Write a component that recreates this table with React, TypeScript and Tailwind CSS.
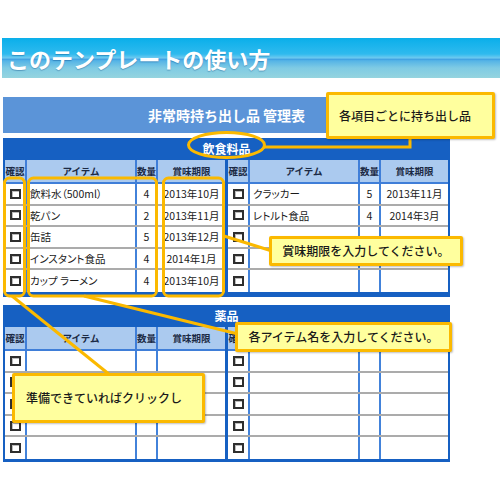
import React from 'react';

type Row = { name?: string; qty?: string; date?: string };

const COLS = 'grid grid-cols-[22px_110px_21px_67px]';

const food: Row[] = [
  { name: '飲料水（500ml）', qty: '4', date: '2013年10月' },
  { name: '乾パン', qty: '2', date: '2013年11月' },
  { name: '缶詰', qty: '5', date: '2013年12月' },
  { name: 'インスタント食品', qty: '4', date: '2014年1月' },
  { name: 'カップ ラーメン', qty: '4', date: '2013年10月' },
];

const food2: Row[] = [
  { name: 'クラッカー', qty: '5', date: '2013年11月' },
  { name: 'レトルト食品', qty: '4', date: '2014年3月' },
  {},
  {},
  {},
];

const empty: Row[] = [{}, {}, {}, {}, {}];

const Check = () => (
  <span className="block w-[11px] h-[10px] border-2 border-[#2e2e2e] bg-white shadow-[inset_1px_1px_0_#bbb]" />
);

function SubTable({ rows }: { rows: Row[] }) {
  const heads = ['確認', 'アイテム', '数量', '賞味期限'];
  return (
    <div className="w-[220px] bg-white">
      <div className={`${COLS} h-[24px] bg-[#abcaef] border-b-2 border-[#3f7ed8] text-[9.5px] font-bold text-[#1c2a45] whitespace-nowrap`}>
        {heads.map((h, i) => (
          <div
            key={h}
            className={`flex items-center justify-center overflow-hidden ${i < 3 ? 'border-r-2 border-[#3f7ed8]' : ''}`}
          >
            {h}
          </div>
        ))}
      </div>
      <div className="grid grid-rows-5 h-[108px] text-[10.5px] text-[#1a1a1a] [font-feature-settings:'palt']">
        {rows.map((r, i) => (
          <div key={i} className={`${COLS} ${i < 4 ? 'border-b-2 border-[#ababab]' : ''}`}>
            <div className="flex items-center justify-center border-r-2 border-[#4282da]">
              <Check />
            </div>
            <div className="flex items-center pl-[3px] border-r-2 border-[#4282da] whitespace-nowrap">{r.name}</div>
            <div className="flex items-center justify-center border-r-2 border-[#4282da]">{r.qty}</div>
            <div className="flex items-center justify-center whitespace-nowrap">{r.date}</div>
          </div>
        ))}
      </div>
    </div>
  );
}

function Table({ title, left, right, className }: { title: string; left: Row[]; right: Row[]; className: string }) {
  return (
    <div className={`w-[447px] bg-[#1660c2] px-[2px] ${className}`}>
      <div className="h-[22px] flex items-center justify-center text-white text-[12px] font-bold">{title}</div>
      <div className="flex gap-[3px]">
        <SubTable rows={left} />
        <SubTable rows={right} />
      </div>
    </div>
  );
}

function Callout({ text, className }: { text: string; className: string }) {
  return (
    <div
      className={`absolute flex items-center border-[3px] border-[#fbb900] bg-[#ffff9e] rounded-[2px] text-[12px] font-medium text-[#1a1a1a] shadow-[1px_1px_2px_rgba(0,0,0,0.25)] whitespace-nowrap ${className}`}
    >
      {text}
    </div>
  );
}

export default function App() {
  return (
    <div className="relative w-[500px] h-[500px] overflow-hidden bg-white font-['Noto_Sans_CJK_JP','Noto_Sans',sans-serif]">
      <div className="pt-[38px] pl-[2px]">
        <div className="h-[40px] w-[498px] flex items-center pl-[5px] bg-[linear-gradient(to_bottom,#0aafea_0%,#2fbaee_40%,#6fcaf0_50%,#3f9fe2_53%,#55b4e6_57%,#7fcbe4_75%,#95d4df_100%)]">
          <h1 className="text-white text-[22px] font-bold leading-none [text-shadow:0_1px_1px_rgba(0,60,120,0.35)]">
            このテンプレートの使い方
          </h1>
        </div>
      </div>

      <div className="pl-[3px] mt-[19px] flex flex-col">
        <div className="w-[447px] h-[36px] bg-[#5b94d8] flex items-center justify-center text-white text-[14px] font-bold">
          非常時持ち出し品 管理表
        </div>
        <Table title="飲食料品" left={food} right={food2} className="mt-[5px] pb-[5px]" />
        <Table title="薬品" left={empty} right={empty} className="mt-[8px] pb-[3px]" />
      </div>

      <svg className="absolute inset-0 pointer-events-none" width="500" height="500" viewBox="0 0 500 500">
        <g fill="none" stroke="#fbb900" strokeWidth="3">
          <ellipse cx="226.5" cy="145" rx="38" ry="12.5" />
          <polyline points="264,147 410,147 410,138" />
          <rect x="4.5" y="178" width="20" height="118" rx="5" />
          <rect x="28.5" y="178" width="128" height="118" rx="5" />
          <rect x="163.5" y="178" width="60" height="118" rx="5" />
          <line x1="224" y1="236" x2="272" y2="251" />
          <line x1="84" y1="296" x2="238" y2="334" />
          <line x1="12" y1="296" x2="110" y2="375" />
        </g>
      </svg>

      <Callout text="各項目ごとに持ち出し品" className="left-[326px] top-[92px] w-[169px] h-[47px] pl-[10px]" />
      <Callout text="賞味期限を入力してください。" className="left-[269px] top-[236px] w-[194px] h-[30px] justify-center" />
      <Callout text="各アイテム名を入力してください。" className="left-[235px] top-[322px] w-[217px] h-[30px] justify-center" />
      <Callout text="準備できていればクリックし" className="left-[12px] top-[373px] w-[193px] h-[50px] pl-[11px]" />
    </div>
  );
}
